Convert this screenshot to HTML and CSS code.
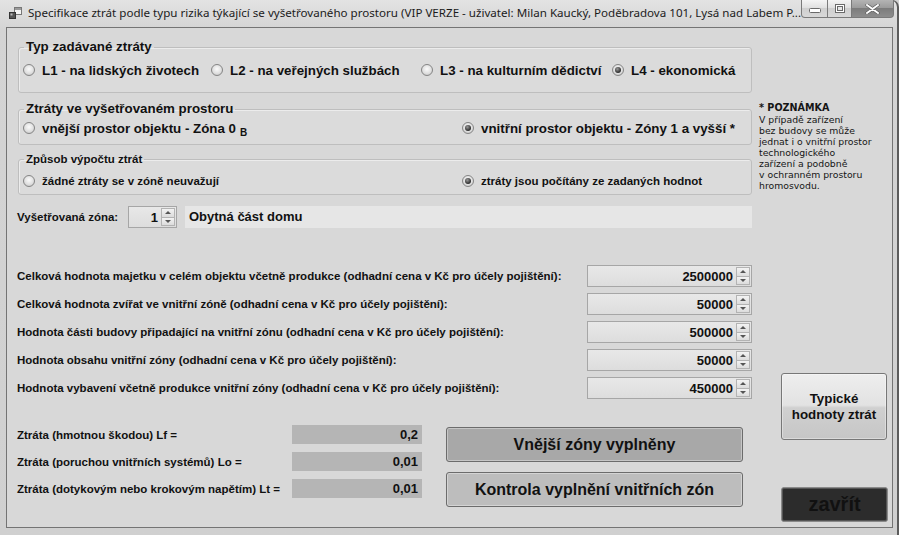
FILE: index.html
```html
<!DOCTYPE html>
<html lang="cs">
<head>
<meta charset="utf-8">
<title>Specifikace ztrát</title>
<link rel="stylesheet" href="styles.css">
</head>
<body>
<div class="window">
  <div class="titlebar">
    <svg class="app-icon" width="13" height="13" viewBox="0 0 13 13">
      <rect x="5.5" y="0.5" width="7" height="7" fill="#f4f4f4" stroke="#777"/>
      <rect x="6" y="1" width="6" height="2" fill="#9a9a9a"/>
      <rect x="0.5" y="5.5" width="6" height="6" fill="#555" stroke="#333"/>
      <rect x="1.5" y="6.5" width="2" height="2" fill="#bbb"/>
    </svg>
    <span class="title">Specifikace ztrát podle typu rizika týkající se vyšetřovaného prostoru (VIP VERZE - uživatel: Milan Kaucký, Poděbradova 101, Lysá nad Labem P...</span>
    <div class="caption">
      <span class="cb cb-min"><svg width="12" height="6" viewBox="0 0 12 6"><rect x="0.5" y="0.5" width="11" height="4" rx="1" fill="#fff" stroke="#6a6a6a"/></svg></span>
      <span class="cb cb-max"><svg width="10" height="9" viewBox="0 0 10 9"><rect x="0.5" y="0.5" width="9" height="8" fill="#fff" stroke="#6a6a6a"/><rect x="2.5" y="2.5" width="5" height="4" fill="#e6e6e6" stroke="#6a6a6a"/></svg></span>
      <span class="cb cb-close"><svg width="15" height="10" viewBox="0 0 15 10"><path d="M2 1 L13 9 M13 1 L2 9" stroke="#5a5a5a" stroke-width="3.2" stroke-linecap="round"/><path d="M2 1 L13 9 M13 1 L2 9" stroke="#fff" stroke-width="2" stroke-linecap="round"/></svg></span>
    </div>
  </div>

  <div class="client">
    <div class="main">
      <fieldset class="group g1">
        <legend>Typ zadávané ztráty</legend>
        <div class="radios cols4">
          <label class="radio"><span class="rb"></span>L1 - na lidských životech</label>
          <label class="radio"><span class="rb"></span>L2 - na veřejných službách</label>
          <label class="radio"><span class="rb"></span>L3 - na kulturním dědictví</label>
          <label class="radio"><span class="rb on"></span>L4 - ekonomická</label>
        </div>
      </fieldset>

      <fieldset class="group g2">
        <legend>Ztráty ve vyšetřovaném prostoru</legend>
        <div class="radios cols2">
          <label class="radio"><span class="rb"></span>vnější prostor objektu - Zóna 0 <span class="sub">B</span></label>
          <label class="radio"><span class="rb on"></span>vnitřní prostor objektu - Zóny 1 a vyšší *</label>
        </div>
      </fieldset>

      <fieldset class="group g3">
        <legend>Způsob výpočtu ztrát</legend>
        <div class="radios cols2 small">
          <label class="radio"><span class="rb"></span>žádné ztráty se v zóně neuvažují</label>
          <label class="radio"><span class="rb on"></span>ztráty jsou počítány ze zadaných hodnot</label>
        </div>
      </fieldset>

      <div class="zone">
        <span class="zone-label">Vyšetřovaná zóna:</span>
        <div class="spin zone-spin"><span class="val">1</span><span class="arrows"><span class="up"></span><span class="down"></span></span></div>
        <div class="zone-name">Obytná část domu</div>
      </div>

      <div class="values">
        <span class="vlabel">Celková hodnota majetku v celém objektu včetně produkce (odhadní cena v Kč pro účely pojištění):</span>
        <div class="spin num"><span class="val">2500000</span><span class="arrows"><span class="up"></span><span class="down"></span></span></div>
        <span class="vlabel">Celková hodnota zvířat ve vnitřní zóně (odhadní cena v Kč pro účely pojištění):</span>
        <div class="spin num"><span class="val">50000</span><span class="arrows"><span class="up"></span><span class="down"></span></span></div>
        <span class="vlabel">Hodnota části budovy připadající na vnitřní zónu (odhadní cena v Kč pro účely pojištění):</span>
        <div class="spin num"><span class="val">500000</span><span class="arrows"><span class="up"></span><span class="down"></span></span></div>
        <span class="vlabel">Hodnota obsahu vnitřní zóny (odhadní cena v Kč pro účely pojištění):</span>
        <div class="spin num"><span class="val">50000</span><span class="arrows"><span class="up"></span><span class="down"></span></span></div>
        <span class="vlabel">Hodnota vybavení včetně produkce vnitřní zóny (odhadní cena v Kč pro účely pojištění):</span>
        <div class="spin num"><span class="val">450000</span><span class="arrows"><span class="up"></span><span class="down"></span></span></div>
      </div>

      <div class="bottom">
        <div class="losses">
          <span class="llabel">Ztráta (hmotnou škodou) Lf =</span>
          <span class="lval">0,2</span>
          <span class="llabel">Ztráta (poruchou vnitřních systémů) Lo =</span>
          <span class="lval">0,01</span>
          <span class="llabel">Ztráta (dotykovým nebo krokovým napětím) Lt =</span>
          <span class="lval">0,01</span>
        </div>
        <div class="actions">
          <button class="btn btn-done">Vnější zóny vyplněny</button>
          <button class="btn btn-check">Kontrola vyplnění vnitřních zón</button>
        </div>
      </div>
    </div>

    <div class="side">
      <div class="note">
        <b>* POZNÁMKA</b>
        V případě zařízení<br>
        bez budovy se může<br>
        jednat i o vnitřní prostor<br>
        technologického<br>
        zařízení a podobně<br>
        v ochranném prostoru<br>
        hromosvodu.
      </div>
      <button class="btn btn-typ">Typické<br>hodnoty ztrát</button>
      <button class="btn btn-close">zavřít</button>
    </div>
  </div>
</div>
</body>
</html>
```

FILE: styles.css
```css
* { box-sizing: border-box; }

body {
  margin: 0;
  width: 899px;
  height: 535px;
  overflow: hidden;
  background: #d2d2d2;
  font-family: "Liberation Sans", Arial, sans-serif;
  color: #111;
}

.window {
  width: 899px;
  height: 535px;
  display: flex;
  flex-direction: column;
  background: linear-gradient(#e3e3e3, #d4d4d4 30px, #d0d0d0);
  border-top-right-radius: 7px;
  box-shadow: inset -2px 0 0 #5c5c5c;
}

/* ---------- title bar ---------- */
.titlebar {
  height: 27px;
  flex: none;
  display: flex;
  align-items: flex-start;
  padding-left: 9px;
}

.app-icon {
  margin-top: 7px;
  flex: none;
}

.title {
  margin-left: 6px;
  margin-top: 5px;
  font-family: "Noto Sans", "Open Sans", sans-serif;
  font-size: 11.6px;
  line-height: 16px;
  color: #1b1b1b;
  white-space: nowrap;
}

.caption {
  margin-left: auto;
  margin-right: 7px;
  display: flex;
  flex: none;
}

.cb {
  height: 18px;
  display: flex;
  align-items: center;
  justify-content: center;
  border: 1px solid #7a7a7a;
  border-top: none;
  background: linear-gradient(#f4f4f4, #dedede 50%, #cfcfcf 50%, #d8d8d8);
}

.cb-min {
  width: 27px;
  border-bottom-left-radius: 4px;
  padding-top: 4px;
}

.cb-max {
  width: 24px;
  border-left: none;
}

.cb-close {
  width: 42px;
  border-left: none;
  border-bottom-right-radius: 4px;
  background: linear-gradient(#b4b4b4, #999 50%, #7c7c7c 50%, #8d8d8d);
}

/* ---------- client area ---------- */
.client {
  flex: none;
  margin: 0 6px;
  height: 501px;
  border: 1px solid #747474;
  background: #d8d8d8;
  display: flex;
}

.main {
  width: 745px;
  padding-left: 11px;
  flex: none;
}

.side {
  width: 133px;
  margin-left: 7px;
  flex: none;
  display: flex;
  flex-direction: column;
}

.side > * { flex: none; }

/* ---------- group boxes ---------- */
.group {
  margin: 0;
  padding: 0 4px;
  min-width: 0;
  border: 1px solid #bebebe;
  border-radius: 3px;
  background: #dbdbdb;
  box-shadow: inset 1px 1px 0 #ececec;
}

.group legend {
  margin-left: 1px;
  padding: 0 2px;
  font-weight: bold;
  font-size: 13.33px;
  line-height: 16px;
}

.g1 { margin-top: 11px; padding-top: 6px; padding-bottom: 13px; }
.g2 { margin-top: 8px; padding-top: 2px; padding-bottom: 7px; }
.g3 { margin-top: 7px; padding-top: 5px; padding-bottom: 4px; }
.g3 legend { font-size: 11.5px; line-height: 15px; }

.radios {
  display: grid;
  height: 18px;
  align-items: center;
}

.cols4 { grid-template-columns: 188px 210px 191px auto; }
.cols2 { grid-template-columns: 439px auto; }

.radio {
  display: flex;
  align-items: center;
  white-space: nowrap;
  font-weight: bold;
  font-size: 13.33px;
}

.small .radio { font-size: 11.5px; }

.rb {
  position: relative;
  flex: none;
  width: 12px;
  height: 12px;
  margin-right: 7px;
  border-radius: 50%;
  border: 1px solid #858585;
  background: radial-gradient(circle at 50% 40%, #fbfbfb 0%, #e0e0e0 55%, #bdbdbd 100%);
}

.rb.on::after {
  content: "";
  position: absolute;
  left: 2px;
  top: 2px;
  width: 6px;
  height: 6px;
  border-radius: 50%;
  background: radial-gradient(circle at 40% 35%, #9a9a9a, #2a2a2a 70%);
}

.sub {
  font-size: 10px;
  margin-left: 4px;
  position: relative;
  top: 4px;
}

/* ---------- spinners ---------- */
.spin {
  height: 22px;
  border: 1px solid #a6a6a6;
  background: linear-gradient(#e8e8e8, #dddddd);
  display: flex;
  align-items: center;
  justify-content: flex-end;
  font-weight: bold;
  font-size: 13px;
}

.spin .val { padding-right: 3px; }

.arrows {
  width: 14px;
  height: 18px;
  margin-right: 1px;
  display: flex;
  flex-direction: column;
}

.arrows span {
  flex: 1;
  border: 1px solid #b3b3b3;
  background: linear-gradient(#f3f3f3, #dcdcdc);
  display: flex;
  align-items: center;
  justify-content: center;
}

.arrows .down { border-top: none; }

.arrows .up::before {
  content: "";
  border-left: 3px solid transparent;
  border-right: 3px solid transparent;
  border-bottom: 3px solid #555;
}

.arrows .down::before {
  content: "";
  border-left: 3px solid transparent;
  border-right: 3px solid transparent;
  border-top: 3px solid #555;
}

/* ---------- zone row ---------- */
.zone {
  margin-top: 11px;
  margin-left: -1px;
  height: 22px;
  display: flex;
  align-items: center;
}

.zone-label {
  width: 111px;
  font-weight: bold;
  font-size: 11.5px;
  white-space: nowrap;
}

.zone-spin { width: 49px; }

.zone-name {
  margin-left: 8px;
  flex: 1;
  height: 22px;
  line-height: 22px;
  padding-left: 4px;
  background: #e6e6e6;
  font-weight: bold;
  font-size: 13px;
}

/* ---------- values ---------- */
.values {
  margin-top: 37px;
  margin-left: -1px;
  display: grid;
  grid-template-columns: 1fr 165px;
  grid-auto-rows: 22px;
  row-gap: 6px;
  align-items: center;
}

.vlabel {
  font-weight: bold;
  font-size: 11.5px;
  white-space: nowrap;
}

/* ---------- bottom ---------- */
.bottom {
  margin-top: 26px;
  margin-left: -1px;
  display: flex;
  align-items: flex-start;
}

.losses {
  display: grid;
  grid-template-columns: 275px 130px;
  grid-auto-rows: 19px;
  row-gap: 8px;
  align-items: center;
}

.llabel {
  font-weight: bold;
  font-size: 11.5px;
  white-space: nowrap;
}

.lval {
  height: 19px;
  line-height: 19px;
  padding-right: 4px;
  background: #b5b5b5;
  text-align: right;
  font-weight: bold;
  font-size: 13px;
}

.actions {
  margin-left: 24px;
  margin-top: 2px;
  width: 297px;
  display: flex;
  flex-direction: column;
  gap: 10px;
}

.btn {
  margin: 0;
  padding: 0;
  height: 35px;
  border: 1px solid #6c6c6c;
  border-radius: 3px;
  font-family: "Liberation Sans", Arial, sans-serif;
  font-weight: bold;
  font-size: 16px;
  color: #111;
  box-shadow: inset 0 0 0 1px rgba(255, 255, 255, 0.35);
}

.btn-done { background: #a8a8a8; }
.btn-check { background: #bdbdbd; }

/* ---------- side column ---------- */
.note {
  margin-top: 74px;
  font-family: "DejaVu Sans", sans-serif;
  font-size: 9.3px;
  line-height: 11px;
  color: #151515;
  white-space: nowrap;
}

.note b {
  display: block;
  font-size: 9.6px;
  line-height: 12px;
}

.btn-typ {
  margin-top: 182px;
  margin-left: 22px;
  width: 106px;
  height: 67px;
  font-size: 13.33px;
  line-height: 16px;
  border-color: #777;
  background: linear-gradient(#eeeeee, #e2e2e2 48%, #d0d0d0 52%, #c6c6c6);
}

.btn-close {
  margin-top: 47px;
  margin-left: 22px;
  width: 107px;
  height: 35px;
  font-size: 20px;
  color: #111;
  background: #2c2c2c;
  border-color: #8a8a8a;
  box-shadow: inset 0 0 0 1px #555;
}
```
